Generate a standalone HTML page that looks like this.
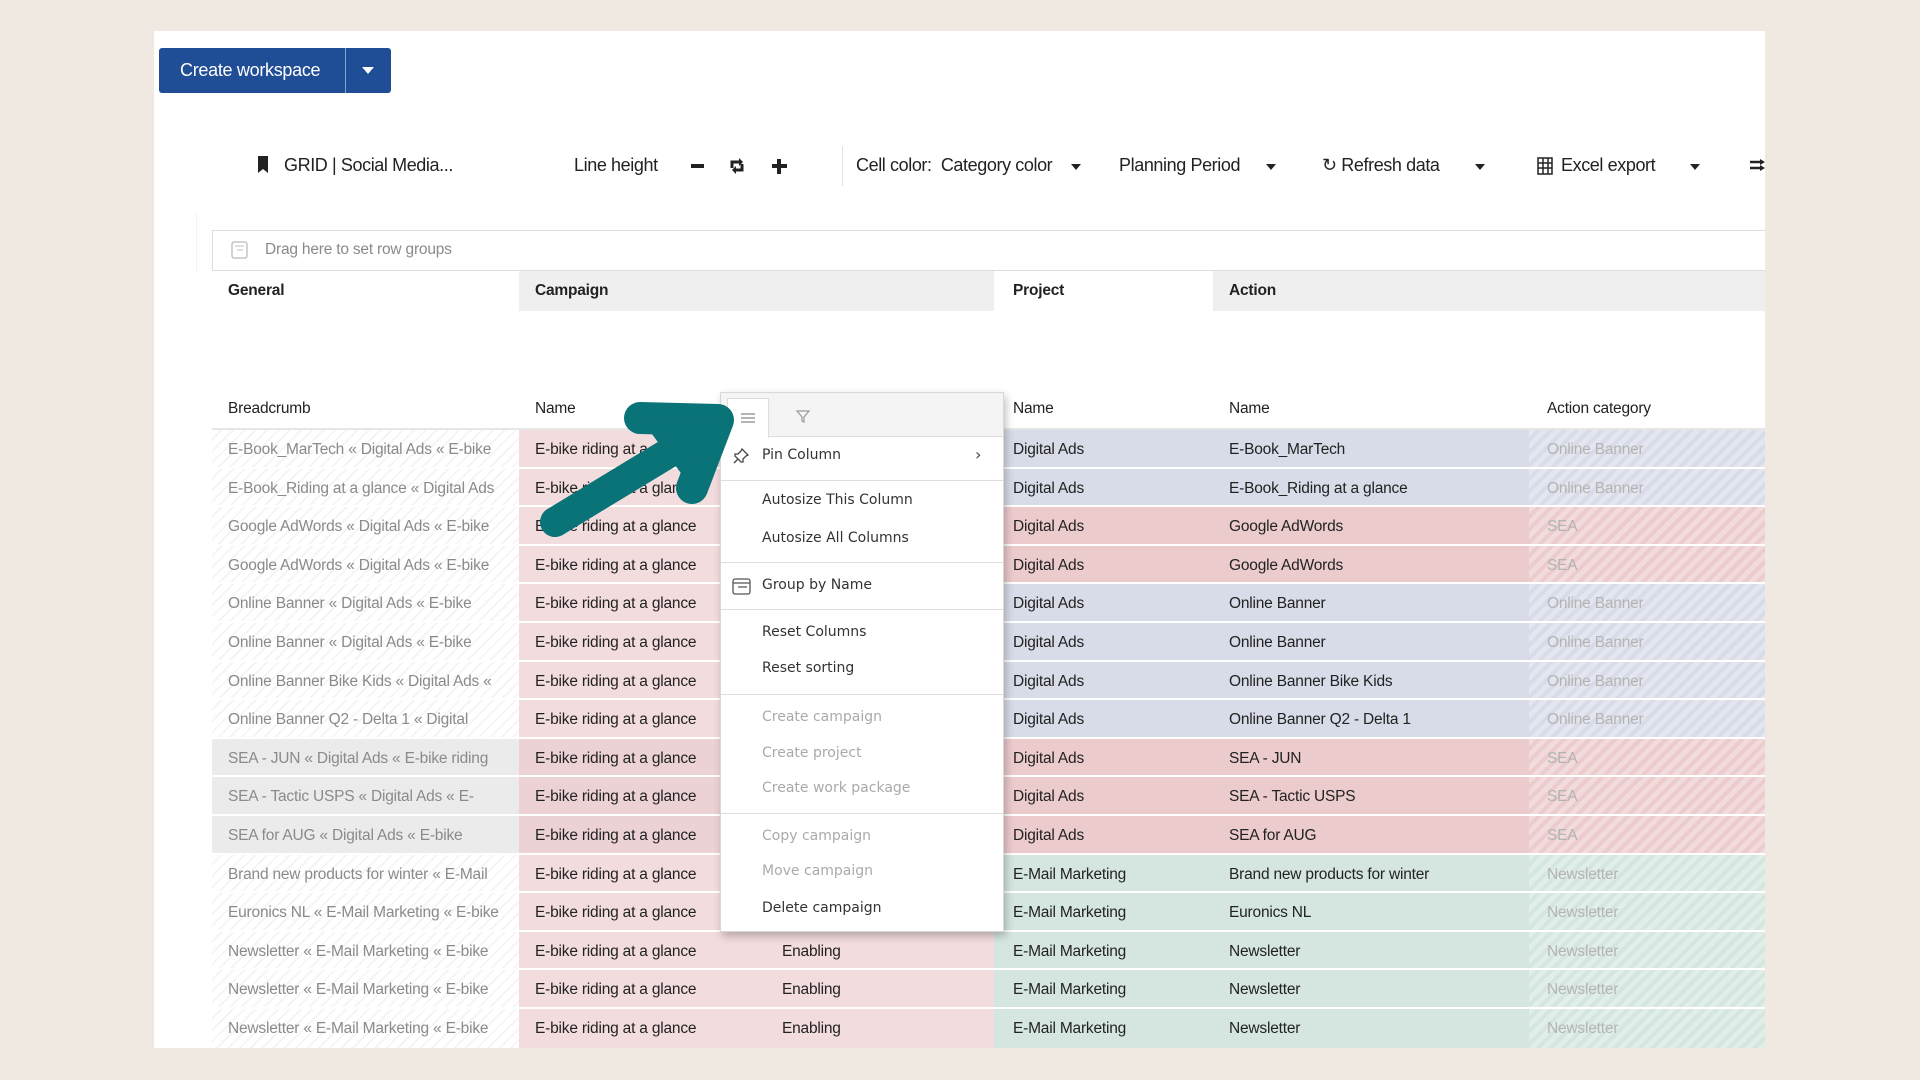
<!DOCTYPE html>
<html><head><meta charset="utf-8">
<style>
*{box-sizing:border-box;margin:0;padding:0}
body{width:1920px;height:1080px;background:#f0e9e2;position:relative;overflow:hidden;font-family:"Liberation Sans",sans-serif;color:#222}
.abs{position:absolute}
#panel{left:154px;top:31px;width:1611px;height:1017px;background:#fff}
.btn{left:159px;top:48px;width:232px;height:45px;background:#1f4d96;border-radius:3px;color:#fff;font-size:18px;letter-spacing:-0.3px}
.tb{top:153px;font-size:18px;letter-spacing:-0.4px;color:#222;white-space:nowrap;line-height:24px}
.car{width:0;height:0;border-left:5px solid transparent;border-right:5px solid transparent;border-top:6px solid #222}
.row{position:absolute;left:212px;width:1553px;height:38.6px;border-bottom:2px solid #fff;font-size:15.5px;letter-spacing:-0.2px}
.row div{position:absolute;top:0;height:100%;line-height:39px;white-space:nowrap;overflow:hidden}
.bc{left:0;width:307px;padding-left:16px;color:#8a8a8a;background:repeating-linear-gradient(135deg,#fff 0 6px,#f5f5f5 6px 8px)}
.cp{left:307px;width:475px;background:#f3dcdd;padding-left:16px}
.pr{left:782px;width:771px}
.ca{left:1317px;width:236px;padding-left:18px;color:#b4b4b4;background:repeating-linear-gradient(135deg,rgba(255,255,255,.3) 0 5px,rgba(255,255,255,0) 5px 9px)}
.b .pr{background:#d8dce8}.p .pr{background:#eccbcd}.g .pr{background:#d4e6df}
.s .bc{background:#ebebeb}.s .cp{background:#ecd2d5}
.t1{position:absolute;left:801px}.t2{position:absolute;left:1017px}
.hd{font-size:15.5px;font-weight:bold;letter-spacing:-0.2px}
#menu{left:720px;top:392px;width:284px;height:540px;background:#fff;border:1px solid #d8d8d8;box-shadow:2px 4px 8px rgba(0,0,0,.25);font-family:"DejaVu Sans",sans-serif;font-size:14px;color:#333}
#menu .it{position:absolute;left:41px}
#menu .dis{color:#aaa}
#menu .sep{position:absolute;left:0;width:282px;border-top:1px solid #ddd}
</style></head><body>
<div id="panel" class="abs"></div>
<div class="abs btn"><span class="abs" style="left:21px;top:12px">Create workspace</span><div class="abs" style="left:186px;top:0;width:1px;height:45px;background:#8aa3cc"></div><div class="abs car" style="left:203px;top:19px;border-top-color:#fff;border-left-width:6px;border-right-width:6px;border-top-width:7px"></div></div>
<div class="abs" style="left:196px;top:212px;width:1px;height:60px;background:#f4f4f4"></div>

<svg class="abs" style="left:257px;top:156px" width="12" height="17"><path d="M1 0h10v17l-5-4-5 4z" fill="#222"/></svg>
<div class="abs tb" style="left:284px">GRID | Social Media...</div>
<div class="abs tb" style="left:574px">Line height</div>
<div class="abs" style="left:691px;top:164px;width:13px;height:4px;background:#222"></div>
<svg class="abs" style="left:729px;top:158px" width="18" height="16"><path d="M3 10V4h9M13 6v6H5" fill="none" stroke="#222" stroke-width="3"/><path d="M10 0l4 4-4 4zM7 8l-4 4 4 4z" fill="#222"/></svg>
<div class="abs" style="left:772px;top:164px;width:15px;height:4px;background:#222"></div>
<div class="abs" style="left:777px;top:159px;width:4px;height:15px;background:#222"></div>
<div class="abs" style="left:842px;top:146px;width:1px;height:40px;background:#e4e4e4"></div>
<div class="abs tb" style="left:856px">Cell color:&nbsp; Category color</div>
<div class="abs car" style="left:1071px;top:164px"></div>
<div class="abs tb" style="left:1119px">Planning Period</div>
<div class="abs car" style="left:1266px;top:164px"></div>
<div class="abs tb" style="left:1322px">&#8635; Refresh data</div>
<div class="abs car" style="left:1475px;top:164px"></div>
<svg class="abs" style="left:1537px;top:157px" width="16" height="18"><path d="M1 1h14v16H1zM1 6h14M1 11h14M6 1v16M11 1v16" fill="none" stroke="#222" stroke-width="1.5"/></svg>
<div class="abs tb" style="left:1561px">Excel export</div>
<div class="abs car" style="left:1690px;top:164px"></div>
<svg class="abs" style="left:1750px;top:158px" width="15" height="14"><path d="M0 4h10M0 10h10" stroke="#222" stroke-width="2.5"/><path d="M10 1l5 3-5 3zM10 7l5 3-5 3z" fill="#222"/></svg>

<div class="abs" style="left:212px;top:230px;width:1553px;height:41px;border:1px solid #ddd;border-right:none"></div>
<svg class="abs" style="left:231px;top:241px" width="17" height="18"><rect x="1" y="1" width="15" height="16" rx="2" fill="none" stroke="#bbb" stroke-width="1.3"/><path d="M4 5h9M6 9h6" stroke="#ccc" stroke-width="1.3"/></svg>
<div class="abs" style="left:265px;top:241px;font-size:15.5px;color:#8a8a8a;letter-spacing:-0.2px">Drag here to set row groups</div>

<div class="abs" style="left:519px;top:271px;width:475px;height:40px;background:#efefef"></div>
<div class="abs" style="left:1213px;top:271px;width:552px;height:40px;background:#efefef"></div>
<div class="abs hd" style="left:228px;top:282px">General</div>
<div class="abs hd" style="left:535px;top:282px">Campaign</div>
<div class="abs hd" style="left:1013px;top:282px">Project</div>
<div class="abs hd" style="left:1229px;top:282px">Action</div>

<div class="abs" style="left:212px;top:428px;width:1553px;height:2px;background:#e6e6e6"></div>
<div class="abs" style="left:228px;top:400px;font-size:15.5px;letter-spacing:-0.2px">Breadcrumb</div>
<div class="abs" style="left:535px;top:400px;font-size:15.5px;letter-spacing:-0.2px">Name</div>
<div class="abs" style="left:1013px;top:400px;font-size:15.5px;letter-spacing:-0.2px">Name</div>
<div class="abs" style="left:1229px;top:400px;font-size:15.5px;letter-spacing:-0.2px">Name</div>
<div class="abs" style="left:1547px;top:400px;font-size:15.5px;letter-spacing:-0.2px">Action category</div>

<div class="row b" style="top:430px"><div class="bc">E-Book_MarTech « Digital Ads « E-bike</div><div class="cp">E-bike riding at a glance</div><div class="pr"><span class="t1" style="left:19px">Digital Ads</span><span class="t2" style="left:235px">E-Book_MarTech</span></div><div class="ca">Online Banner</div></div>
<div class="row b" style="top:468.6px"><div class="bc">E-Book_Riding at a glance « Digital Ads</div><div class="cp">E-bike riding at a glance</div><div class="pr"><span class="t1" style="left:19px">Digital Ads</span><span class="t2" style="left:235px">E-Book_Riding at a glance</span></div><div class="ca">Online Banner</div></div>
<div class="row p" style="top:507.2px"><div class="bc">Google AdWords « Digital Ads « E-bike</div><div class="cp">E-bike riding at a glance</div><div class="pr"><span class="t1" style="left:19px">Digital Ads</span><span class="t2" style="left:235px">Google AdWords</span></div><div class="ca">SEA</div></div>
<div class="row p" style="top:545.8px"><div class="bc">Google AdWords « Digital Ads « E-bike</div><div class="cp">E-bike riding at a glance</div><div class="pr"><span class="t1" style="left:19px">Digital Ads</span><span class="t2" style="left:235px">Google AdWords</span></div><div class="ca">SEA</div></div>
<div class="row b" style="top:584.4px"><div class="bc">Online Banner « Digital Ads « E-bike</div><div class="cp">E-bike riding at a glance</div><div class="pr"><span class="t1" style="left:19px">Digital Ads</span><span class="t2" style="left:235px">Online Banner</span></div><div class="ca">Online Banner</div></div>
<div class="row b" style="top:623px"><div class="bc">Online Banner « Digital Ads « E-bike</div><div class="cp">E-bike riding at a glance</div><div class="pr"><span class="t1" style="left:19px">Digital Ads</span><span class="t2" style="left:235px">Online Banner</span></div><div class="ca">Online Banner</div></div>
<div class="row b" style="top:661.6px"><div class="bc">Online Banner Bike Kids « Digital Ads «</div><div class="cp">E-bike riding at a glance</div><div class="pr"><span class="t1" style="left:19px">Digital Ads</span><span class="t2" style="left:235px">Online Banner Bike Kids</span></div><div class="ca">Online Banner</div></div>
<div class="row b" style="top:700.2px"><div class="bc">Online Banner Q2 - Delta 1 « Digital</div><div class="cp">E-bike riding at a glance</div><div class="pr"><span class="t1" style="left:19px">Digital Ads</span><span class="t2" style="left:235px">Online Banner Q2 - Delta 1</span></div><div class="ca">Online Banner</div></div>
<div class="row p s" style="top:738.8px"><div class="bc">SEA - JUN « Digital Ads « E-bike riding</div><div class="cp">E-bike riding at a glance</div><div class="pr"><span class="t1" style="left:19px">Digital Ads</span><span class="t2" style="left:235px">SEA - JUN</span></div><div class="ca">SEA</div></div>
<div class="row p s" style="top:777.4px"><div class="bc">SEA - Tactic USPS « Digital Ads « E-</div><div class="cp">E-bike riding at a glance</div><div class="pr"><span class="t1" style="left:19px">Digital Ads</span><span class="t2" style="left:235px">SEA - Tactic USPS</span></div><div class="ca">SEA</div></div>
<div class="row p s" style="top:816px"><div class="bc">SEA for AUG « Digital Ads « E-bike</div><div class="cp">E-bike riding at a glance</div><div class="pr"><span class="t1" style="left:19px">Digital Ads</span><span class="t2" style="left:235px">SEA for AUG</span></div><div class="ca">SEA</div></div>
<div class="row g" style="top:854.6px"><div class="bc">Brand new products for winter « E-Mail</div><div class="cp">E-bike riding at a glance</div><div class="pr"><span class="t1" style="left:19px">E-Mail Marketing</span><span class="t2" style="left:235px">Brand new products for winter</span></div><div class="ca">Newsletter</div></div>
<div class="row g" style="top:893.2px"><div class="bc">Euronics NL « E-Mail Marketing « E-bike</div><div class="cp">E-bike riding at a glance</div><div class="pr"><span class="t1" style="left:19px">E-Mail Marketing</span><span class="t2" style="left:235px">Euronics NL</span></div><div class="ca">Newsletter</div></div>
<div class="row g" style="top:931.8px"><div class="bc">Newsletter « E-Mail Marketing « E-bike</div><div class="cp">E-bike riding at a glance<span style="position:absolute;left:263px">Enabling</span></div><div class="pr"><span class="t1" style="left:19px">E-Mail Marketing</span><span class="t2" style="left:235px">Newsletter</span></div><div class="ca">Newsletter</div></div>
<div class="row g" style="top:970.4px"><div class="bc">Newsletter « E-Mail Marketing « E-bike</div><div class="cp">E-bike riding at a glance<span style="position:absolute;left:263px">Enabling</span></div><div class="pr"><span class="t1" style="left:19px">E-Mail Marketing</span><span class="t2" style="left:235px">Newsletter</span></div><div class="ca">Newsletter</div></div>
<div class="row g" style="top:1009px;border-bottom:none"><div class="bc">Newsletter « E-Mail Marketing « E-bike</div><div class="cp">E-bike riding at a glance<span style="position:absolute;left:263px">Enabling</span></div><div class="pr"><span class="t1" style="left:19px">E-Mail Marketing</span><span class="t2" style="left:235px">Newsletter</span></div><div class="ca">Newsletter</div></div>

<div id="menu" class="abs">
 <div class="abs" style="left:0;top:0;width:282px;height:44px;background:#f4f4f4;border-bottom:1px solid #ddd"></div>
 <div class="abs" style="left:6px;top:5px;width:42px;height:40px;background:#fff;border:1px solid #ddd;border-bottom:none"></div>
 <svg class="abs" style="left:20px;top:20px" width="14" height="10"><path d="M0 1h14M0 5h14M0 9h14" stroke="#888" stroke-width="1.2"/></svg>
 <svg class="abs" style="left:75px;top:17px" width="14" height="13"><path d="M1 1h12L8 7v5L6 11V7z" fill="none" stroke="#999" stroke-width="1.2"/></svg>
 <svg class="abs" style="left:12px;top:55px" width="16" height="16"><path d="M9 1l6 6-2 1-3 3 0 3-2 0-6-6 0-2 3 0 3-3zM5 11l-4 4" fill="none" stroke="#444" stroke-width="1.3"/></svg>
 <div class="it" style="top:54px">Pin Column</div>
 <div class="abs" style="left:254px;top:52px;font-size:16px;color:#444">&#8250;</div>
 <div class="sep" style="top:87px"></div>
 <div class="it" style="top:99px">Autosize This Column</div>
 <div class="it" style="top:137px">Autosize All Columns</div>
 <div class="sep" style="top:169px"></div>
 <svg class="abs" style="left:11px;top:185px" width="19" height="17"><rect x="1" y="1" width="17" height="15" rx="2" fill="none" stroke="#555" stroke-width="1.3"/><path d="M1 5h17M6 9h9" stroke="#555" stroke-width="1.2"/></svg>
 <div class="it" style="top:184px">Group by Name</div>
 <div class="sep" style="top:216px"></div>
 <div class="it" style="top:231px">Reset Columns</div>
 <div class="it" style="top:267px">Reset sorting</div>
 <div class="sep" style="top:301px"></div>
 <div class="it dis" style="top:316px">Create campaign</div>
 <div class="it dis" style="top:352px">Create project</div>
 <div class="it dis" style="top:387px">Create work package</div>
 <div class="sep" style="top:420px"></div>
 <div class="it dis" style="top:435px">Copy campaign</div>
 <div class="it dis" style="top:470px">Move campaign</div>
 <div class="it" style="top:507px">Delete campaign</div>
</div>

<svg class="abs" style="left:0;top:0" width="1920" height="1080">
 <path d="M555 522L690 440" stroke="#0a7377" stroke-width="30" stroke-linecap="round"/>
 <path d="M640 418L718 420L692 488" fill="none" stroke="#0a7377" stroke-width="32" stroke-linecap="round" stroke-linejoin="round"/>
 <path d="M640 418L718 420L692 488Z" fill="#0a7377"/>
</svg>
</body></html>
